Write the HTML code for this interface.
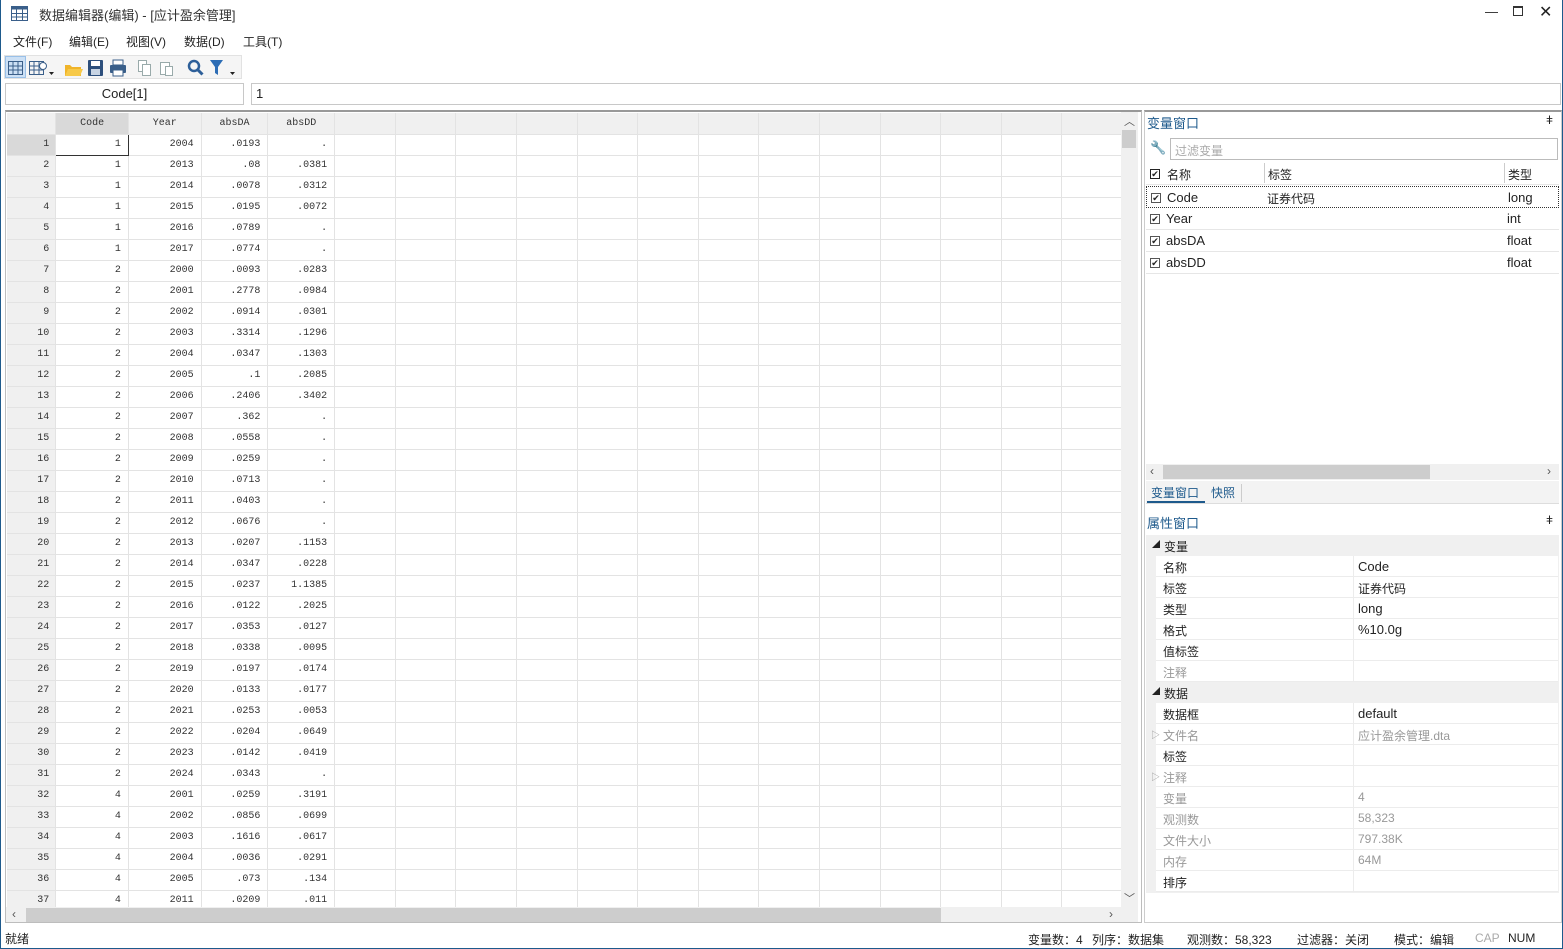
<!DOCTYPE html>
<html><head><meta charset="utf-8"><style>
*{margin:0;padding:0;box-sizing:border-box}
body{width:1563px;height:949px;overflow:hidden;background:#fff;font-family:"Liberation Sans","Noto Sans CJK SC",sans-serif;font-size:12px;color:#222;position:relative;border-left:1px solid #1e5a8c;border-right:1px solid #1e5a8c;border-bottom:1px solid #1e5a8c}
.a{position:absolute}
.menu span{position:absolute;top:33px;font-size:12px}
table{border-collapse:collapse;table-layout:fixed}
#g td{height:21px;border-right:1px solid #e3e3e3;border-bottom:1px solid #e3e3e3;font-family:"Liberation Mono",monospace;font-size:10px;text-align:right;padding-right:7px;color:#333;white-space:nowrap;overflow:hidden}
#g td:first-child{background:#f0f0f0;padding-right:6px}
#g tr.h td{background:#f0f0f0;text-align:center;padding:0}
.pr{position:absolute;left:1155px;width:402px;height:21px;border-bottom:1px solid #ececec;font-size:12px}
.pr .k{position:absolute;left:7px;top:3px}
.pr .v{position:absolute;left:202px;top:3px}
.pr .d{position:absolute;left:197px;top:0;height:21px;border-left:1px solid #ececec}
.gr{color:#999}
.vl{position:absolute;left:1145px;width:413px;height:22px;border-bottom:1px solid #e6e6e6;font-size:12px}
.cb{position:absolute;left:4px;top:6px;width:10px;height:10px;border:1px solid #555;font-size:9px;line-height:8px;text-align:center}
.st{position:absolute;top:931px;font-size:12px;white-space:nowrap}
</style></head><body>
<svg class="a" style="left:10px;top:6px" width="17" height="15"><rect x="0.5" y="0.5" width="16" height="14" fill="#fff" stroke="#3a5f8a"/><rect x="0.5" y="0.5" width="16" height="3" fill="#3a5f8a"/><path d="M0 7.5H17M0 11H17M5.5 3V15M11.5 3V15" stroke="#3a5f8a"/></svg>
<div class="a" style="left:38px;top:5px;font-size:13px;color:#333">数据编辑器(编辑) - [应计盈余管理]</div>
<div class="a" style="left:1484px;top:4px;font-size:13px">—</div>
<div class="a" style="left:1512px;top:6px;width:10px;height:10px;border:1px solid #333;border-top-width:2px"></div>
<div class="a" style="left:1538px;top:2px;font-size:16px">✕</div>
<div class="menu"><span style="left:12px">文件(F)</span><span style="left:68px">编辑(E)</span><span style="left:125px">视图(V)</span><span style="left:183px">数据(D)</span><span style="left:242px">工具(T)</span></div>
<div class="a" style="left:3px;top:55px;width:238px;height:24px;background:#f5f5f5;border:1px solid #e2e2e2"></div>
<div class="a" style="left:4px;top:56px;width:21px;height:22px;background:#cce0f5;border:1px solid #99c0e8"></div>
<svg class="a" style="left:6px;top:59px" width="230" height="18">
<g stroke="#3a5f8a" fill="none"><rect x="1.5" y="2.5" width="14" height="13"/><path d="M1 7H16M1 11H16M6 3V16M11 3V16"/>
<rect x="22.5" y="2.5" width="14" height="13"/><path d="M22 7H37M22 11H37M27 3V16M32 3V16"/></g>
<circle cx="36" cy="7" r="3.5" fill="#fff" stroke="#3a5f8a"/><path d="M42 13h5l-2.5 3z" fill="#222"/>
<path d="M58 6h5l2 2h9v9H58z" fill="#f0b429"/><path d="M58 17l3-7h15l-3 7z" fill="#f7c948"/>
<rect x="81" y="1" width="15" height="16" rx="1" fill="#2d4f7c"/><rect x="84" y="2" width="9" height="5" fill="#fff"/><rect x="84" y="10" width="9" height="6" fill="#c8d4e3"/>
<rect x="103" y="6" width="16" height="8" rx="1" fill="#3a5f8a"/><rect x="106" y="1" width="10" height="5" fill="#fff" stroke="#3a5f8a"/><rect x="106" y="11" width="10" height="6" fill="#fff" stroke="#3a5f8a"/>
<g stroke="#9aa" fill="#fff"><rect x="131.5" y="1.5" width="8" height="11"/><rect x="135.5" y="5.5" width="8" height="11"/><rect x="153.5" y="3.5" width="9" height="12"/><rect x="158.5" y="7.5" width="7" height="9"/></g>
<circle cx="187" cy="7" r="5" fill="none" stroke="#2d5f99" stroke-width="2.5"/><path d="M190.5 10.5l5 5" stroke="#2d5f99" stroke-width="3"/>
<path d="M203 1h13l-5 7v8l-3-2V8z" fill="#2d6db5"/><path d="M223 13h5l-2.5 3z" fill="#222"/>
</svg>
<div class="a" style="left:4px;top:83px;width:239px;height:22px;border:1px solid #c8c8c8;text-align:center;font-size:13px;line-height:20px">Code[1]</div>
<div class="a" style="left:250px;top:83px;width:1310px;height:22px;border:1px solid #c8c8c8;font-size:13px;line-height:20px;padding-left:4px">1</div>
<div class="a" style="left:4px;top:110px;width:1137px;height:813px;border:1px solid #bdbdbd;border-top:2px solid #999;overflow:hidden">
<div class="a" style="left:1px;top:1px;width:1116px;height:795px;overflow:hidden">
<table id="g"><colgroup><col style="width:49px"><col style="width:73px"><col style="width:73px"><col style="width:67px"><col style="width:67px"><col style="width:61px"><col style="width:61px"><col style="width:61px"><col style="width:61px"><col style="width:61px"><col style="width:61px"><col style="width:61px"><col style="width:61px"><col style="width:61px"><col style="width:61px"><col style="width:61px"><col style="width:61px"><col style="width:61px"></colgroup>
<tr class="h"><td></td><td style="background:#d9d9d9">Code</td><td>Year</td><td>absDA</td><td>absDD</td><td></td><td></td><td></td><td></td><td></td><td></td><td></td><td></td><td></td><td></td><td></td><td></td><td></td></tr>
<tr><td style="background:#d9d9d9">1</td><td style="border:1px solid #333">1</td><td>2004</td><td>.0193</td><td>.</td><td></td><td></td><td></td><td></td><td></td><td></td><td></td><td></td><td></td><td></td><td></td><td></td><td></td></tr>
<tr><td>2</td><td>1</td><td>2013</td><td>.08</td><td>.0381</td><td></td><td></td><td></td><td></td><td></td><td></td><td></td><td></td><td></td><td></td><td></td><td></td><td></td></tr>
<tr><td>3</td><td>1</td><td>2014</td><td>.0078</td><td>.0312</td><td></td><td></td><td></td><td></td><td></td><td></td><td></td><td></td><td></td><td></td><td></td><td></td><td></td></tr>
<tr><td>4</td><td>1</td><td>2015</td><td>.0195</td><td>.0072</td><td></td><td></td><td></td><td></td><td></td><td></td><td></td><td></td><td></td><td></td><td></td><td></td><td></td></tr>
<tr><td>5</td><td>1</td><td>2016</td><td>.0789</td><td>.</td><td></td><td></td><td></td><td></td><td></td><td></td><td></td><td></td><td></td><td></td><td></td><td></td><td></td></tr>
<tr><td>6</td><td>1</td><td>2017</td><td>.0774</td><td>.</td><td></td><td></td><td></td><td></td><td></td><td></td><td></td><td></td><td></td><td></td><td></td><td></td><td></td></tr>
<tr><td>7</td><td>2</td><td>2000</td><td>.0093</td><td>.0283</td><td></td><td></td><td></td><td></td><td></td><td></td><td></td><td></td><td></td><td></td><td></td><td></td><td></td></tr>
<tr><td>8</td><td>2</td><td>2001</td><td>.2778</td><td>.0984</td><td></td><td></td><td></td><td></td><td></td><td></td><td></td><td></td><td></td><td></td><td></td><td></td><td></td></tr>
<tr><td>9</td><td>2</td><td>2002</td><td>.0914</td><td>.0301</td><td></td><td></td><td></td><td></td><td></td><td></td><td></td><td></td><td></td><td></td><td></td><td></td><td></td></tr>
<tr><td>10</td><td>2</td><td>2003</td><td>.3314</td><td>.1296</td><td></td><td></td><td></td><td></td><td></td><td></td><td></td><td></td><td></td><td></td><td></td><td></td><td></td></tr>
<tr><td>11</td><td>2</td><td>2004</td><td>.0347</td><td>.1303</td><td></td><td></td><td></td><td></td><td></td><td></td><td></td><td></td><td></td><td></td><td></td><td></td><td></td></tr>
<tr><td>12</td><td>2</td><td>2005</td><td>.1</td><td>.2085</td><td></td><td></td><td></td><td></td><td></td><td></td><td></td><td></td><td></td><td></td><td></td><td></td><td></td></tr>
<tr><td>13</td><td>2</td><td>2006</td><td>.2406</td><td>.3402</td><td></td><td></td><td></td><td></td><td></td><td></td><td></td><td></td><td></td><td></td><td></td><td></td><td></td></tr>
<tr><td>14</td><td>2</td><td>2007</td><td>.362</td><td>.</td><td></td><td></td><td></td><td></td><td></td><td></td><td></td><td></td><td></td><td></td><td></td><td></td><td></td></tr>
<tr><td>15</td><td>2</td><td>2008</td><td>.0558</td><td>.</td><td></td><td></td><td></td><td></td><td></td><td></td><td></td><td></td><td></td><td></td><td></td><td></td><td></td></tr>
<tr><td>16</td><td>2</td><td>2009</td><td>.0259</td><td>.</td><td></td><td></td><td></td><td></td><td></td><td></td><td></td><td></td><td></td><td></td><td></td><td></td><td></td></tr>
<tr><td>17</td><td>2</td><td>2010</td><td>.0713</td><td>.</td><td></td><td></td><td></td><td></td><td></td><td></td><td></td><td></td><td></td><td></td><td></td><td></td><td></td></tr>
<tr><td>18</td><td>2</td><td>2011</td><td>.0403</td><td>.</td><td></td><td></td><td></td><td></td><td></td><td></td><td></td><td></td><td></td><td></td><td></td><td></td><td></td></tr>
<tr><td>19</td><td>2</td><td>2012</td><td>.0676</td><td>.</td><td></td><td></td><td></td><td></td><td></td><td></td><td></td><td></td><td></td><td></td><td></td><td></td><td></td></tr>
<tr><td>20</td><td>2</td><td>2013</td><td>.0207</td><td>.1153</td><td></td><td></td><td></td><td></td><td></td><td></td><td></td><td></td><td></td><td></td><td></td><td></td><td></td></tr>
<tr><td>21</td><td>2</td><td>2014</td><td>.0347</td><td>.0228</td><td></td><td></td><td></td><td></td><td></td><td></td><td></td><td></td><td></td><td></td><td></td><td></td><td></td></tr>
<tr><td>22</td><td>2</td><td>2015</td><td>.0237</td><td>1.1385</td><td></td><td></td><td></td><td></td><td></td><td></td><td></td><td></td><td></td><td></td><td></td><td></td><td></td></tr>
<tr><td>23</td><td>2</td><td>2016</td><td>.0122</td><td>.2025</td><td></td><td></td><td></td><td></td><td></td><td></td><td></td><td></td><td></td><td></td><td></td><td></td><td></td></tr>
<tr><td>24</td><td>2</td><td>2017</td><td>.0353</td><td>.0127</td><td></td><td></td><td></td><td></td><td></td><td></td><td></td><td></td><td></td><td></td><td></td><td></td><td></td></tr>
<tr><td>25</td><td>2</td><td>2018</td><td>.0338</td><td>.0095</td><td></td><td></td><td></td><td></td><td></td><td></td><td></td><td></td><td></td><td></td><td></td><td></td><td></td></tr>
<tr><td>26</td><td>2</td><td>2019</td><td>.0197</td><td>.0174</td><td></td><td></td><td></td><td></td><td></td><td></td><td></td><td></td><td></td><td></td><td></td><td></td><td></td></tr>
<tr><td>27</td><td>2</td><td>2020</td><td>.0133</td><td>.0177</td><td></td><td></td><td></td><td></td><td></td><td></td><td></td><td></td><td></td><td></td><td></td><td></td><td></td></tr>
<tr><td>28</td><td>2</td><td>2021</td><td>.0253</td><td>.0053</td><td></td><td></td><td></td><td></td><td></td><td></td><td></td><td></td><td></td><td></td><td></td><td></td><td></td></tr>
<tr><td>29</td><td>2</td><td>2022</td><td>.0204</td><td>.0649</td><td></td><td></td><td></td><td></td><td></td><td></td><td></td><td></td><td></td><td></td><td></td><td></td><td></td></tr>
<tr><td>30</td><td>2</td><td>2023</td><td>.0142</td><td>.0419</td><td></td><td></td><td></td><td></td><td></td><td></td><td></td><td></td><td></td><td></td><td></td><td></td><td></td></tr>
<tr><td>31</td><td>2</td><td>2024</td><td>.0343</td><td>.</td><td></td><td></td><td></td><td></td><td></td><td></td><td></td><td></td><td></td><td></td><td></td><td></td><td></td></tr>
<tr><td>32</td><td>4</td><td>2001</td><td>.0259</td><td>.3191</td><td></td><td></td><td></td><td></td><td></td><td></td><td></td><td></td><td></td><td></td><td></td><td></td><td></td></tr>
<tr><td>33</td><td>4</td><td>2002</td><td>.0856</td><td>.0699</td><td></td><td></td><td></td><td></td><td></td><td></td><td></td><td></td><td></td><td></td><td></td><td></td><td></td></tr>
<tr><td>34</td><td>4</td><td>2003</td><td>.1616</td><td>.0617</td><td></td><td></td><td></td><td></td><td></td><td></td><td></td><td></td><td></td><td></td><td></td><td></td><td></td></tr>
<tr><td>35</td><td>4</td><td>2004</td><td>.0036</td><td>.0291</td><td></td><td></td><td></td><td></td><td></td><td></td><td></td><td></td><td></td><td></td><td></td><td></td><td></td></tr>
<tr><td>36</td><td>4</td><td>2005</td><td>.073</td><td>.134</td><td></td><td></td><td></td><td></td><td></td><td></td><td></td><td></td><td></td><td></td><td></td><td></td><td></td></tr>
<tr><td>37</td><td>4</td><td>2011</td><td>.0209</td><td>.011</td><td></td><td></td><td></td><td></td><td></td><td></td><td></td><td></td><td></td><td></td><td></td><td></td><td></td></tr>
</table></div>
<div class="a" style="left:1115px;top:0;width:17px;height:795px;background:#f0f0f0"></div>
<div class="a" style="left:1116px;top:18px;width:14px;height:18px;background:#cdcdcd"></div>
<div class="a" style="left:1118px;top:1px;font-size:11px;color:#555">︿</div>
<div class="a" style="left:1118px;top:778px;font-size:11px;color:#555">﹀</div>
<div class="a" style="left:0;top:795px;width:1132px;height:16px;background:#f0f0f0"></div>
<div class="a" style="left:20px;top:796px;width:915px;height:14px;background:#cdcdcd"></div>
<div class="a" style="left:6px;top:795px;font-size:12px;color:#555">‹</div>
<div class="a" style="left:1103px;top:795px;font-size:12px;color:#555">›</div>
</div>
<div class="a" style="left:1143px;top:110px;width:418px;height:813px;border:1px solid #ccc;border-top:2px solid #999"></div>
<div class="a" style="left:1146px;top:113px;font-size:13px;color:#1e5a8c">变量窗口</div>
<div class="a" style="left:1545px;top:113px;font-size:12px">ǂ</div>
<div class="a" style="left:1149px;top:140px;font-size:13px;color:#777">🔧</div>
<div class="a" style="left:1169px;top:138px;width:388px;height:22px;border:1px solid #bbb;font-size:12px;color:#aaa;padding:3px 4px">过滤变量</div>
<div class="vl" style="top:163px"><div class="cb" style="border-color:#222">✔</div><span class="a" style="left:21px;top:3px">名称</span><span class="a" style="left:118px;top:0;height:20px;border-left:1px solid #ccc"></span><span class="a" style="left:122px;top:3px">标签</span><span class="a" style="left:358px;top:0;height:20px;border-left:1px solid #ccc"></span><span class="a" style="left:362px;top:3px">类型</span></div>
<div class="vl" style="top:186px;border:1px dotted #333"><div class="cb">✔</div><span class="a" style="left:20px;top:3px;font-size:13px">Code</span><span class="a" style="left:120px;top:3px">证券代码</span><span class="a" style="left:361px;top:3px;font-size:13px">long</span></div>
<div class="vl" style="top:208px"><div class="cb">✔</div><span class="a" style="left:20px;top:3px;font-size:13px">Year</span><span class="a" style="left:361px;top:3px;font-size:13px">int</span></div>
<div class="vl" style="top:230px"><div class="cb">✔</div><span class="a" style="left:20px;top:3px;font-size:13px">absDA</span><span class="a" style="left:361px;top:3px;font-size:13px">float</span></div>
<div class="vl" style="top:252px"><div class="cb">✔</div><span class="a" style="left:20px;top:3px;font-size:13px">absDD</span><span class="a" style="left:361px;top:3px;font-size:13px">float</span></div>
<div class="a" style="left:1145px;top:464px;width:413px;height:16px;background:#f0f0f0"></div>
<div class="a" style="left:1162px;top:465px;width:267px;height:14px;background:#cdcdcd"></div>
<div class="a" style="left:1149px;top:464px;font-size:12px;color:#555">‹</div>
<div class="a" style="left:1546px;top:464px;font-size:12px;color:#555">›</div>
<div class="a" style="left:1145px;top:481px;width:413px;height:23px;background:#f3f3f3;border-bottom:1px solid #ddd"></div>
<div class="a" style="left:1146px;top:482px;width:58px;height:21px;border-bottom:2px solid #1e5a8c;font-size:12px;color:#1e5a8c;padding:2px 4px">变量窗口</div>
<div class="a" style="left:1210px;top:484px;font-size:12px;color:#1e5a8c">快照</div>
<div class="a" style="left:1240px;top:484px;height:18px;border-left:1px solid #ccc"></div>
<div class="a" style="left:1146px;top:513px;font-size:13px;color:#1e5a8c">属性窗口</div>
<div class="a" style="left:1545px;top:513px;font-size:12px">ǂ</div>
<div class="a" style="left:1145px;top:535px;width:413px;height:358px;background:#f0f0f0"></div>
<div class="a" style="left:1151px;top:539px;font-size:8px">◢</div><div class="a" style="left:1163px;top:538px;font-size:12px">变量</div>
<div class="pr" style="top:556px;background:#fff"><span class="k">名称</span><span class="d"></span><span class="v" style="font-size:13px">Code</span></div>
<div class="pr" style="top:577px;background:#fff"><span class="k">标签</span><span class="d"></span><span class="v">证券代码</span></div>
<div class="pr" style="top:598px;background:#fff"><span class="k">类型</span><span class="d"></span><span class="v" style="font-size:13px">long</span></div>
<div class="pr" style="top:619px;background:#fff"><span class="k">格式</span><span class="d"></span><span class="v" style="font-size:13px">%10.0g</span></div>
<div class="pr" style="top:640px;background:#fff"><span class="k">值标签</span><span class="d"></span></div>
<div class="pr gr" style="top:661px;background:#fff"><span class="k">注释</span><span class="d"></span></div>
<div class="a" style="left:1151px;top:686px;font-size:8px">◢</div><div class="a" style="left:1163px;top:685px;font-size:12px">数据</div>
<div class="pr" style="top:703px;background:#fff"><span class="k">数据框</span><span class="d"></span><span class="v" style="font-size:13px">default</span></div>
<div class="pr gr" style="top:724px;background:#fff"><span class="k">文件名</span><span class="d"></span><span class="v">应计盈余管理.dta</span></div>
<div class="pr" style="top:745px;background:#fff"><span class="k">标签</span><span class="d"></span></div>
<div class="pr gr" style="top:766px;background:#fff"><span class="k">注释</span><span class="d"></span></div>
<div class="pr gr" style="top:787px;background:#fff"><span class="k">变量</span><span class="d"></span><span class="v">4</span></div>
<div class="pr gr" style="top:808px;background:#fff"><span class="k">观测数</span><span class="d"></span><span class="v">58,323</span></div>
<div class="pr gr" style="top:829px;background:#fff"><span class="k">文件大小</span><span class="d"></span><span class="v">797.38K</span></div>
<div class="pr gr" style="top:850px;background:#fff"><span class="k">内存</span><span class="d"></span><span class="v">64M</span></div>
<div class="pr" style="top:871px;background:#fff"><span class="k">排序</span><span class="d"></span></div>
<div class="a gr" style="left:1150px;top:728px;font-size:9px">▷</div>
<div class="a gr" style="left:1150px;top:770px;font-size:9px">▷</div>
<div class="a" style="left:4px;top:930px;font-size:12px">就绪</div>
<span class="st" style="left:1027px">变量数：4</span>
<span class="st" style="left:1091px">列序：数据集</span>
<span class="st" style="left:1186px">观测数：58,323</span>
<span class="st" style="left:1296px">过滤器：关闭</span>
<span class="st" style="left:1393px">模式：编辑</span>
<span class="st" style="left:1474px;color:#aaa">CAP</span>
<span class="st" style="left:1507px">NUM</span>
</body></html>
